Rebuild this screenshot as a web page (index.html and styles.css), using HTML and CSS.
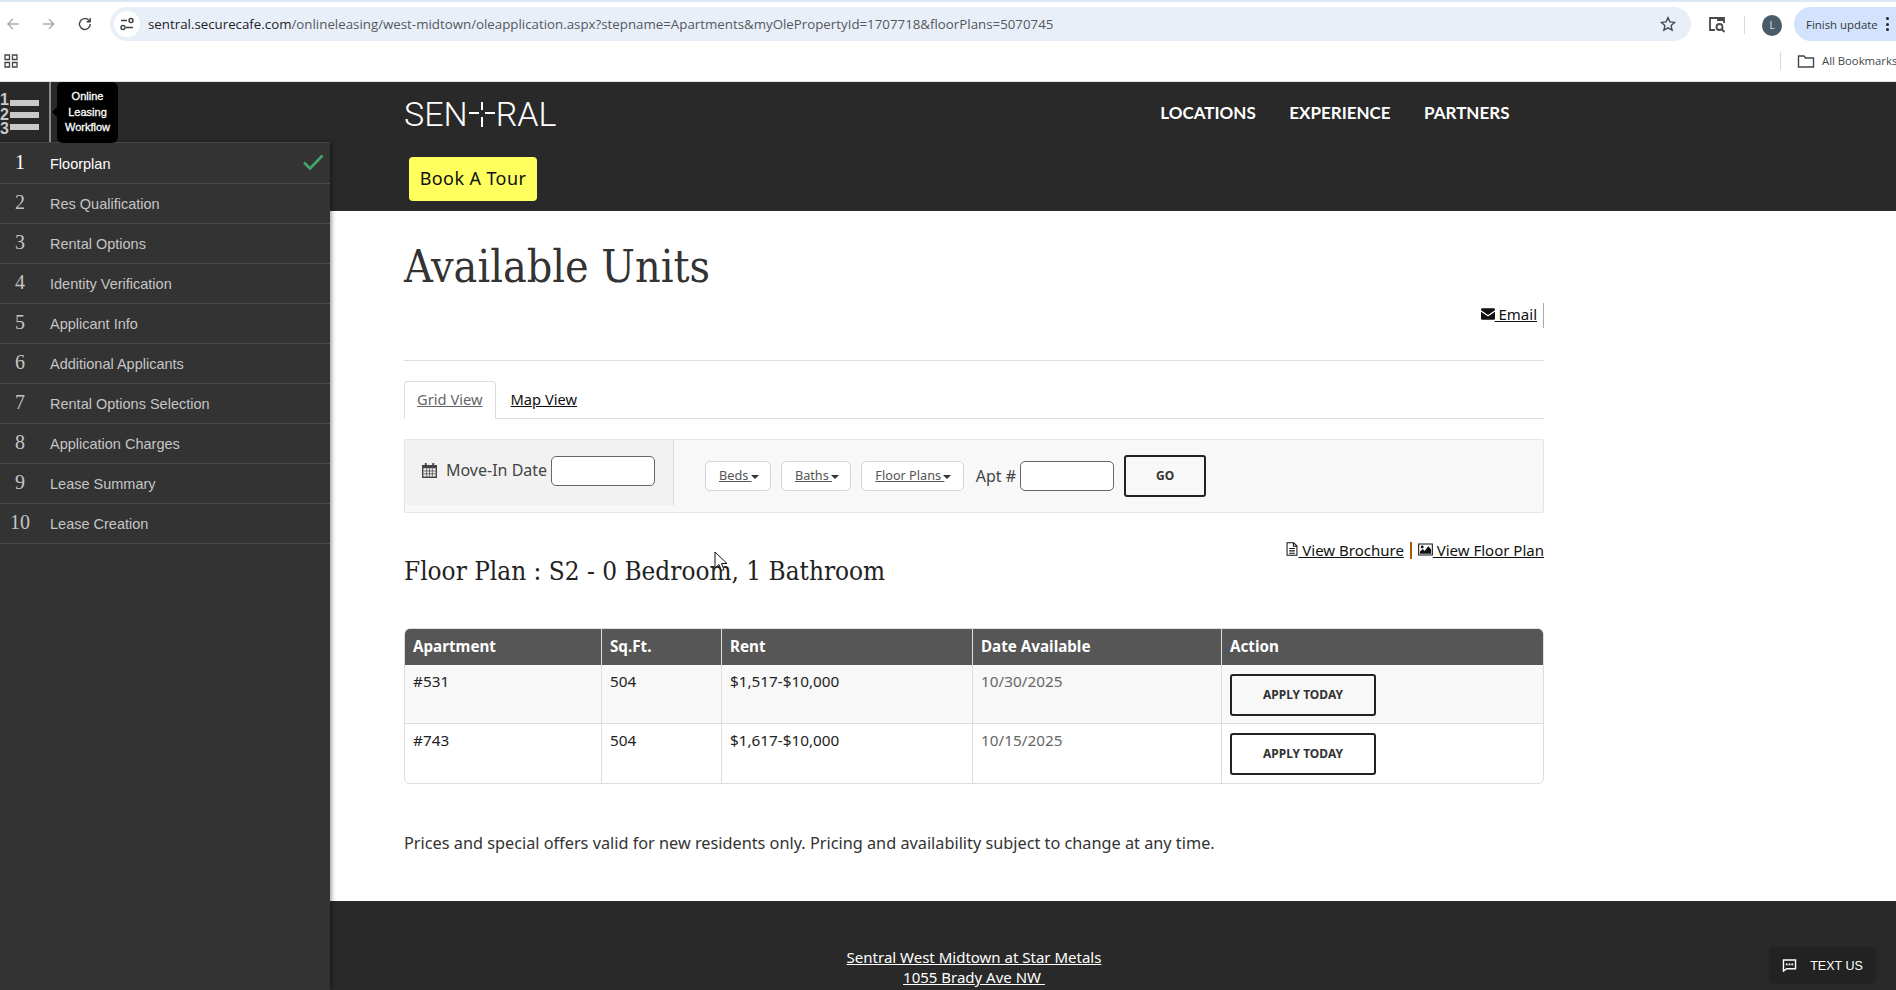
FILE: index.html
```html
<!DOCTYPE html>
<html lang="en">
<head>
  <meta charset="UTF-8" />
  <meta name="viewport" content="width=device-width, initial-scale=1.0" />
  <title>Available Units</title>
  <link rel="stylesheet" href="styles.css">
</head>
<body>
  <div class="toolbar">
    <svg class="nav-ico" viewBox="0 0 16 16"><path d="M14 8H3M8 3L3 8l5 5" /></svg>
    <svg class="nav-ico" viewBox="0 0 16 16"><path d="M2 8h11M8 3l5 5-5 5" /></svg>
    <svg class="nav-ico dark" viewBox="0 0 16 16"><path d="M13.5 8a5.5 5.5 0 1 1-1.6-3.9L13.5 5.7M13.5 2v3.7H9.8" /></svg>
    <div class="omnibox">
      <span class="site-info">
        <svg viewBox="0 0 16 16" width="16" height="16"><path d="M2 4.500h6M7 11.500h7" /><circle cx="12" cy="4.500" r="2" /><circle cx="4" cy="11.500" r="2" /></svg>
      </span>
      <span class="url"><b>sentral.securecafe.com</b>/onlineleasing/west-midtown/oleapplication.aspx?stepname=Apartments&amp;myOlePropertyId=1707718&amp;floorPlans=5070745</span>
      <svg class="star" viewBox="0 0 24 24" width="18" height="18"><path d="M12 3.500l2.600 5.700 6.200.7-4.600 4.200 1.300 6.100L12 17.100l-5.500 3.100 1.300-6.100-4.600-4.200 6.200-.7z" /></svg>
    </div>
    <svg class="tab-search" viewBox="0 0 20 20" width="20" height="20"><path d="M8 16H3V4h14v5" /><path class="fill" d="M10 4h7v3h-7z" /><circle cx="12.500" cy="13" r="3" /><path d="M15 15.500l2.500 2.500" /></svg>
    <span class="tool-sep"></span>
    <span class="avatar">L</span>
    <div class="update">Finish update <span class="dots"><i></i><i></i><i></i></span></div>
  </div>

  <div class="bookmarks">
    <svg class="apps" viewBox="0 0 14 14" width="14" height="14"><path d="M1 1h4.500v4.500H1zM8.500 1H13v4.500H8.500zM1 8.500h4.500V13H1zM8.500 8.500H13V13H8.500z" /></svg>
    <div class="all-marks">
      <span class="tool-sep"></span>
      <svg viewBox="0 0 18 16" width="18" height="16"><path d="M1.500 3h5.500l1.500 2h8v9h-15z" /></svg>
      <span>All Bookmarks</span>
    </div>
  </div>

  <div class="page">
    <aside class="rail">
      <div class="rail-top">
        <div class="burger">
          <div class="burger-nums"><b>1</b><b>2</b><b>3</b></div>
          <div class="burger-bars"><i></i><i></i><i></i></div>
        </div>
        <div class="flow-tip">Online<br>Leasing<br>Workflow</div>
      </div>
      <ol class="steps">
        <li class="step current"><span class="num">1</span>Floorplan
          <svg class="check" viewBox="0 0 22 16" width="22" height="16"><path d="M2 8.500l6 6L20.500 1.500" /></svg>
        </li>
        <li class="step"><span class="num">2</span>Res Qualification</li>
        <li class="step"><span class="num">3</span>Rental Options</li>
        <li class="step"><span class="num">4</span>Identity Verification</li>
        <li class="step"><span class="num">5</span>Applicant Info</li>
        <li class="step"><span class="num">6</span>Additional Applicants</li>
        <li class="step"><span class="num">7</span>Rental Options Selection</li>
        <li class="step"><span class="num">8</span>Application Charges</li>
        <li class="step"><span class="num">9</span>Lease Summary</li>
        <li class="step"><span class="num">10</span>Lease Creation</li>
      </ol>
    </aside>

    <div class="site">
      <header class="site-head">
        <div class="head-top">
          <div class="logo">SEN<span class="logo-t"></span>RAL</div>
          <nav class="main-nav">
            <a>LOCATIONS</a>
            <a>EXPERIENCE</a>
            <a>PARTNERS</a>
          </nav>
        </div>
        <a class="tour-btn">Book A Tour</a>
      </header>

      <main class="content">
        <h1>Available Units</h1>
        <div class="email-row">
          <a class="email-link">
            <svg viewBox="0 0 16 13" width="14" height="12"><path class="solid" d="M0 1.500A1.500 1.500 0 0 1 1.500 0h13A1.500 1.500 0 0 1 16 1.500v.7L8 7.500 0 2.200zM0 4l8 5.300L16 4v7.500a1.500 1.500 0 0 1-1.500 1.500h-13A1.500 1.500 0 0 1 0 11.500z" /></svg>
            Email</a>
        </div>

        <div class="tabs">
          <a class="tab active">Grid View</a>
          <a class="tab">Map View</a>
        </div>

        <div class="filters">
          <div class="date-cell">
            <svg viewBox="0 0 16 16" width="15" height="15"><path class="solid" d="M3 0h2v2h6V0h2v2h3v14H0V2h3zM1.500 5.500v9h13v-9z" /><path class="thin" d="M5 5.500v9M8 5.500v9M11 5.500v9M1.500 8.500h13M1.500 11.500h13" /></svg>
            <span>Move-In Date</span>
            <input class="text-box date-box" type="text" />
          </div>
          <div class="filter-cell">
            <a class="pick">Beds <span class="caret"></span></a>
            <a class="pick">Baths <span class="caret"></span></a>
            <a class="pick">Floor Plans <span class="caret"></span></a>
            <span class="apt-label">Apt #</span>
            <input class="text-box apt-box" type="text" />
            <a class="outline-btn go-btn">GO</a>
          </div>
        </div>

        <div class="plan-head">
          <h2>Floor Plan : S2 - 0 Bedroom, 1 Bathroom</h2>
          <div class="plan-links">
            <a>
              <svg viewBox="0 0 12 15" width="12" height="14"><path class="line" d="M.7.7h7l3.600 3.600v10H.7zM7.500.7v3.800h3.800M3 7h6M3 9.500h6M3 12h6" /></svg>
              View Brochure</a>
            <span class="pipe"></span>
            <a>
              <svg viewBox="0 0 16 13" width="15" height="13"><path class="line" d="M.7.7h14.600v11.600H.7z" /><path class="solid" d="M2 11v-2l3-3 2 2 4-5 3 3.500V11z" /><circle class="solid" cx="4.500" cy="3.800" r="1.500" /></svg>
              View Floor Plan</a>
          </div>
        </div>

        <table class="units">
          <thead>
            <tr><th class="c-apt">Apartment</th><th class="c-sq">Sq.Ft.</th><th class="c-rent">Rent</th><th class="c-date">Date Available</th><th>Action</th></tr>
          </thead>
          <tbody>
            <tr>
              <td>#531</td><td>504</td><td>$1,517-$10,000</td><td class="date">10/30/2025</td>
              <td><a class="outline-btn apply-btn">APPLY TODAY</a></td>
            </tr>
            <tr>
              <td>#743</td><td>504</td><td>$1,617-$10,000</td><td class="date">10/15/2025</td>
              <td><a class="outline-btn apply-btn">APPLY TODAY</a></td>
            </tr>
          </tbody>
        </table>

        <p class="disclaimer">Prices and special offers valid for new residents only. Pricing and availability subject to change at any time.</p>
      </main>

      <footer class="site-foot">
        <a>Sentral West Midtown at Star Metals</a><br>
        <a>1055 Brady Ave NW&nbsp;</a>
      </footer>
    </div>
  </div>

  <a class="text-us">
    <svg viewBox="0 0 16 14" width="15" height="13"><path class="bubble" d="M1.500 1h13v9.500H5L1.500 13z" /><path class="bubble-dots" d="M4 5.800h8" /></svg>
    TEXT US
  </a>

  <svg class="cursor" viewBox="0 0 14 22" width="14" height="22"><path d="M1 1v16l4-3.500 2.500 6 2.500-1-2.500-6H13z" /></svg>
</body>
</html>
```

FILE: styles.css
```css
:root {
  --dark: #292929;
  --rail: #333333;
  --line: #dddddd;
  --text: #333333;
  --body-font: "Noto Sans", "Open Sans", sans-serif;
  --serif: "DejaVu Serif Condensed", "DejaVu Serif", serif;
}
* { box-sizing: border-box; }
html, body { height: 100%; }
body {
  margin: 0;
  height: 990px;
  overflow: hidden;
  background: #fff;
  color: var(--text);
  font-family: var(--body-font);
  font-size: 15px;
}
a { color: inherit; }

/* browser chrome */
.toolbar {
  height: 42px;
  padding: 7px 0 0 5px;
  border-top: 2px solid #dbe8f5;
  display: flex;
  align-items: flex-start;
  background: #fff;
}
.nav-ico {
  width: 16px;
  height: 16px;
  margin: 7px 20px 0 0;
  fill: none;
  stroke: #a9adb1;
  stroke-width: 1.5;
}
.nav-ico.dark { stroke: #47494c; margin-left: 1px; }
.omnibox {
  width: 1581px;
  height: 34px;
  margin: -2px 0 0 -3px;
  padding: 0 14px 0 4px;
  border-radius: 17px;
  background: #e9eff9;
  display: flex;
  align-items: center;
  flex: none;
}
.site-info {
  width: 26px;
  height: 26px;
  border-radius: 50%;
  background: #fff;
  display: flex;
  align-items: center;
  justify-content: center;
  margin-right: 8px;
}
.site-info svg { fill: none; stroke: #3c4043; stroke-width: 1.4; }
.url {
  flex: 1;
  font-family: "Open Sans", sans-serif;
  font-size: 13.300px;
  color: #55585c;
  white-space: nowrap;
}
.url b { font-weight: 400; color: #1f2226; }
.star { fill: none; stroke: #44474a; stroke-width: 1.8; }
.tab-search { margin: 5px 0 0 16px; fill: none; stroke: #47494c; stroke-width: 1.8; flex: none; }
.tab-search .fill { fill: #47494c; stroke: none; }
.tool-sep { width: 1px; height: 18px; background: #cfdbe8; flex: none; }
.toolbar .tool-sep { margin: 7px 17px 0 17px; }
.avatar {
  width: 20px;
  height: 21px;
  margin-top: 6px;
  border-radius: 50%;
  background: #4a5c68;
  color: #d5dde2;
  font-size: 10px;
  text-align: center;
  line-height: 21px;
  flex: none;
}
.update {
  height: 34px;
  margin: -2px -10px 0 12px;
  padding: 0 10px 0 12px;
  width: 112px;
  flex: none;
  border-radius: 17px 0 0 17px;
  background: #d3e3fd;
  display: flex;
  align-items: center;
  font-family: "Open Sans", sans-serif;
  font-size: 11.400px;
  color: #33373b;
  white-space: nowrap;
}
.dots { display: flex; flex-direction: column; gap: 2.500px; margin-left: 8px; }
.dots i { width: 3px; height: 3px; border-radius: 50%; background: #202428; }

.bookmarks {
  height: 40px;
  padding: 0 0 2px 4px;
  display: flex;
  align-items: center;
  justify-content: space-between;
  border-bottom: 1px solid #e2e2e2;
  background: #fff;
}
.apps { fill: none; stroke: #44474a; stroke-width: 1.3; }
.all-marks {
  display: flex;
  align-items: center;
  width: 116px;
  flex: none;
  font-family: "Open Sans", sans-serif;
  font-size: 11.300px;
  color: #44474a;
  white-space: nowrap;
  overflow: hidden;
}
.all-marks svg { margin: 0 7px 0 16px; fill: none; stroke: #44474a; stroke-width: 1.4; flex: none; }

/* page */
.page {
  display: flex;
  height: 908px;
  background: var(--dark);
}
.rail {
  width: 330px;
  flex: none;
  display: flex;
  flex-direction: column;
  position: relative;
  z-index: 2;
}
.rail-top {
  height: 60px;
  position: relative;
}
.burger {
  width: 51px;
  height: 60px;
  padding: 13px 0 0;
  border-right: 2px solid #8a8a8a;
  display: flex;
}
.burger-nums {
  width: 10px;
  margin-top: -2px;
  display: flex;
  flex-direction: column;
  font-family: "Liberation Sans", sans-serif;
  font-size: 16px;
  line-height: 14.500px;
  color: #c9c9c9;
}
.burger-bars {
  display: flex;
  flex-direction: column;
  gap: 6px;
  padding-top: 5px;
}
.burger-bars i { display: block; width: 29px; height: 6px; background: #c9c9c9; }
.flow-tip {
  position: absolute;
  left: 57px;
  top: 0;
  width: 61px;
  height: 61px;
  padding-top: 7px;
  border-radius: 6px;
  background: #000;
  color: #fff;
  font-family: "Liberation Sans", sans-serif;
  font-size: 11px;
  -webkit-text-stroke: .3px #fff;
  line-height: 15.500px;
  text-align: center;
}
.flow-tip::before {
  content: "";
  position: absolute;
  left: -5px;
  top: 25px;
  border: 5px solid transparent;
  border-left: 0;
  border-right-color: #000;
}
.steps {
  flex: 1;
  margin: 0;
  padding: 1px 0 0;
  list-style: none;
  background: var(--rail);
  box-shadow: 2px 0 4px rgba(0, 0, 0, 0.35);
  border-top: 1px solid #444;
}
.step {
  height: 40px;
  display: flex;
  align-items: center;
  border-bottom: 1px solid #4a4a4a;
  font-family: "Liberation Sans", sans-serif;
  font-size: 14.500px;
  color: #c5c5c5;
}
.step.current { color: #fff; }
.num {
  width: 40px;
  margin-right: 10px;
  text-align: center;
  font-family: "Liberation Serif", serif;
  font-size: 20px;
  margin-top: -3px;
}
.check {
  margin: -3px 6px 0 auto;
  fill: none;
  stroke: #44a56b;
  stroke-width: 2.600;
}

.site {
  flex: 1;
  min-width: 0;
  display: flex;
  flex-direction: column;
}
.site-head {
  height: 129px;
  padding: 0 0 0 74px;
}
.head-top {
  width: 1140px;
  height: 75px;
  display: flex;
  justify-content: space-between;
}
.logo {
  margin-top: 17px;
  height: 30px;
  font-family: Roboto, sans-serif;
  font-weight: 300;
  font-size: 34px;
  line-height: 30px;
  color: #fff;
  display: flex;
  align-items: center;
}
.logo-t {
  width: 26px;
  height: 25px;
  margin: 0 1px;
  flex: none;
  background:
    linear-gradient(#fff, #fff) center 0 / 2px 8px no-repeat,
    linear-gradient(#fff, #fff) center 100% / 2px 10px no-repeat,
    linear-gradient(#fff, #fff) 0 10px / 10px 2px no-repeat,
    linear-gradient(#fff, #fff) 100% 10px / 10px 2px no-repeat;
}
.main-nav {
  display: flex;
  gap: 33.500px;
  margin: 20px 34.500px 0 0;
  font-family: Lato, sans-serif;
  font-size: 17px;
  font-weight: 700;
  color: #fff;
}
.tour-btn {
  display: inline-block;
  margin-left: 5px;
  width: 128px;
  height: 44px;
  border-radius: 4px;
  background: #ffff5e;
  color: #111;
  font-family: "Noto Sans", sans-serif;
  font-size: 18px;
  letter-spacing: .4px;
  line-height: 43px;
  text-align: center;
}

.content {
  flex: 1;
  background: #fff;
  padding: 0 0 0 74px;
}
.content > * { width: 1140px; }
h1 {
  margin: 0;
  padding-top: 26px;
  height: 83px;
  font-family: var(--serif);
  font-size: 44.400px;
  line-height: 60px;
  font-weight: 400;
  color: var(--text);
}
.email-row {
  height: 67px;
  padding-top: 9px;
  border-bottom: 1px solid #ddd;
  display: flex;
  justify-content: flex-end;
}
.email-link {
  height: 25px;
  padding-right: 6px;
  border-right: 1px solid #aaa;
  color: #111;
  text-decoration: underline;
  line-height: 22px;
}
.solid { fill: currentColor; }
.thin { fill: none; stroke: currentColor; stroke-width: .8; }
.line { fill: none; stroke: currentColor; stroke-width: 1.1; }

.tabs {
  display: flex;
  gap: 2px;
  margin-top: 20px;
  height: 38px;
  border-bottom: 1px solid #ddd;
  font-size: 14.700px;
}
.tab {
  height: 38px;
  padding: 0 12px;
  line-height: 35px;
  color: #111;
  text-decoration: underline;
  border: 1px solid transparent;
  border-bottom: 0;
}
.tab.active {
  color: #666;
  background: #fff;
  border-color: #ddd;
  border-radius: 4px 4px 0 0;
}
.filters {
  margin-top: 20px;
  height: 74px;
  padding-bottom: 7px;
  display: flex;
  background: #f8f8f8;
  border: 1px solid #e6e6e6;
  border-radius: 2px;
}
.date-cell {
  width: 269px;
  display: flex;
  align-items: flex-start;
  padding: 16px 0 0 17px;
  background: #f2f2f2;
  border-right: 1px solid #ddd;
  font-size: 16px;
  color: #444;
}
.date-cell svg { margin: 7px 9px 0 0; flex: none; color: #444; }
.date-cell span { line-height: 26px; margin: 1px 4px 0 0; white-space: nowrap; }
.text-box {
  height: 30px;
  border: 1px solid #666;
  border-radius: 5px;
  background: #fff;
  padding: 0 6px;
}
.date-box { width: 104px; }
.filter-cell {
  flex: 1;
  display: flex;
  align-items: center;
  padding: 7px 0 0 31px;
}
.pick {
  height: 30px;
  margin-right: 10px;
  padding: 0 11.300px 0 13px;
  border: 1px solid #d4d4d4;
  border-radius: 5px;
  background: #fff;
  color: #555;
  font-size: 12.700px;
  line-height: 27px;
  text-decoration: underline;
  white-space: nowrap;
}
.caret {
  display: inline-block;
  margin-left: -1px;
  vertical-align: middle;
  border: 4px solid transparent;
  border-top-color: #333;
  border-bottom: 0;
}
.apt-label { font-size: 16px; color: #444; margin: 0 4px 0 2px; white-space: nowrap; }
.apt-box { width: 94px; }
.outline-btn {
  display: block;
  border: 2px solid #222;
  border-radius: 3px;
  text-align: center;
  font-weight: 700;
  font-size: 12px;
  color: #333;
}
.go-btn {
  width: 82px;
  height: 42px;
  margin-left: 10px;
  line-height: 37px;
}

.plan-head {
  height: 115px;
  padding-top: 27px;
  display: flex;
  justify-content: space-between;
  align-items: flex-start;
}
h2 {
  margin: 0;
  padding-top: 13px;
  font-family: var(--serif);
  font-size: 25.900px;
  line-height: 36px;
  font-weight: 400;
  color: #222;
}
.plan-links { display: flex; align-items: center; font-size: 15px; color: #111; }
.plan-links a { text-decoration: underline; }
.pipe { width: 2px; height: 17px; margin: 0 6px; background: #a85a00; }

.units {
  border-collapse: separate;
  border-spacing: 0;
  table-layout: fixed;
  font-size: 15.300px;
  border: 1px solid var(--line);
  border-radius: 6px;
  overflow: hidden;
}
.units th {
  height: 36px;
  padding: 0 8px 3px;
  background: #565656;
  color: #fff;
  text-align: left;
  font-size: 15.200px;
  font-weight: 700;
  border-right: 1px solid #ddd;
}
.units th:last-child, .units td:last-child { border-right: 0; }
.c-apt { width: 197px; }
.c-sq { width: 120px; }
.c-rent { width: 251px; }
.c-date { width: 249px; }
.units td {
  height: 59px;
  padding: 4px 8px 0;
  vertical-align: top;
  border-right: 1px solid var(--line);
  color: #222;
  line-height: 24px;
}
.units tbody tr:first-child td { background: #f8f8f8; border-bottom: 1px solid var(--line); }
.units td.date { color: #666; }
.apply-btn {
  width: 146px;
  height: 42px;
  margin-top: 5px;
  line-height: 37px;
}
.disclaimer {
  margin: 47px 0 0;
  font-size: 16.270px;
  line-height: 24px;
  color: #333;
}

.site-foot {
  height: 89px;
  padding: 46px 0 0 74px;
  width: 1214px;
  text-align: center;
  color: #fff;
  font-size: 15px;
  line-height: 20px;
  flex: none;
}
.site-foot a { text-decoration: underline; }

/* things that float over the page */
.text-us {
  position: absolute;
  right: 21px;
  bottom: 7px;
  width: 105px;
  height: 35px;
  border-radius: 5px;
  background: #222;
  color: #fff;
  font-family: "Liberation Sans", sans-serif;
  font-size: 12.500px;
  display: flex;
  align-items: center;
  justify-content: center;
  gap: 13px;
  box-shadow: 0 0 3px rgba(0, 0, 0, 0.3);
}
.bubble { fill: none; stroke: #fff; stroke-width: 1.500; }
.bubble-dots { fill: none; stroke: #fff; stroke-width: 2; stroke-dasharray: 2 1; }
.cursor {
  position: absolute;
  left: 714px;
  top: 551px;
  fill: #fff;
  stroke: #111;
  stroke-width: 1;
}
```
